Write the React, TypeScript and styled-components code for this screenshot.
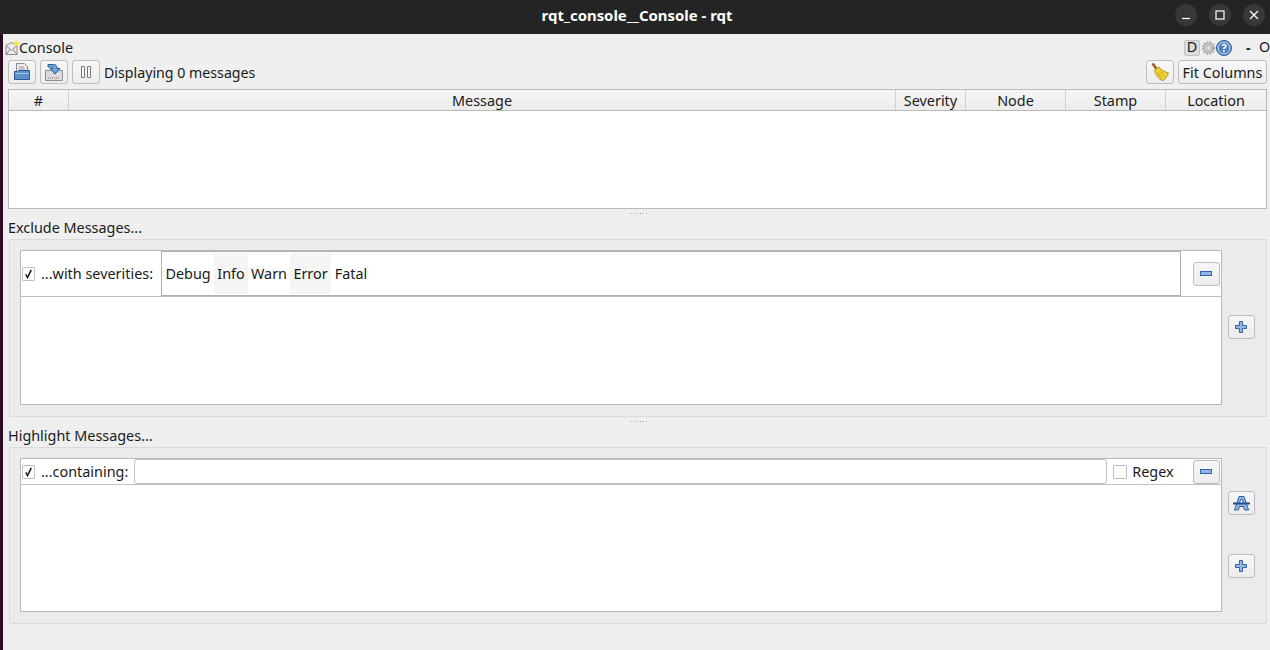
import React from "react";
import styled, { createGlobalStyle } from "styled-components";

const Global = createGlobalStyle`
  html, body { margin: 0; padding: 0; background: #efefef; overflow: hidden; }
  * { box-sizing: border-box; }
  body { font-family: "Noto Sans", "Open Sans", sans-serif; font-size: 14.4px; color: #1a1a1a; }
`;

const Screen = styled.div`width: 1270px; height: 650px; display: flex; flex-direction: column; overflow: hidden;`;
const TitleBar = styled.header`
  height: 34px; flex: none; background: #242424; color: #fff; position: relative;
  display: flex; align-items: center; justify-content: center;
  font-weight: 700; font-size: 14.9px; padding: 0 0 4px 4px;
`;
const WinButtons = styled.div`position: absolute; right: 5px; top: 4px; display: flex; gap: 12px;`;
const WinButton = styled.div`
  width: 22px; height: 22px; border-radius: 50%; background: #383838;
  display: flex; align-items: center; justify-content: center;
`;
const Body = styled.div`flex: 1; display: flex; min-height: 0;`;
const Strip = styled.div`width: 3px; flex: none; background: #2c0a24;`;
const Main = styled.main`flex: 1; background: #efefef; display: flex; flex-direction: column; padding: 0 3px 0 5px; min-width: 0;`;

const TitleRow = styled.div`
  height: 26px; flex: none; display: flex; align-items: center; margin-left: -3px; padding-top: 1px; line-height: 1;
  & > svg { flex: none; }
`;
const PluginTitle = styled.span`margin-left: -1px; padding-top: 2px; flex: 1;`;
const DButton = styled.span`
  width: 16px; height: 16px; flex: none; margin-right: 1px; background: #dcdcdc; border: 1px solid #c4c4c4; border-radius: 2px;
  display: flex; align-items: center; justify-content: center; font-size: 14.4px;
`;
const Dash = styled.span`font-weight: 700; margin-left: 14px; width: 13px; flex: none; font-size: 14px;`;
const Oh = styled.span`width: 11px; flex: none; margin-right: -3px;`;

const Toolbar = styled.div`height: 24px; flex: none; display: flex; align-items: center;`;
const ToolButton = styled.button<{ $w?: number; $gap?: number }>`
  width: ${p => p.$w ?? 28}px; height: 24px; margin-right: ${p => p.$gap ?? 4}px; padding: 0; flex: none;
  background: linear-gradient(#f7f7f7, #ececec); border: 1px solid #bdbdbd; border-radius: 3px;
  display: flex; align-items: center; justify-content: center; font: inherit; color: inherit;
`;
const Status = styled.span`flex: 1; font-size: 14.2px;`;

const Table = styled.section`
  height: 120px; margin-top: 5px; background: #fff; border: 1px solid #b9b9b9; flex: none;
`;
const HeaderRow = styled.div`height: 21px; display: flex; border-bottom: 1px solid #b9b9b9; background: linear-gradient(#f6f6f6, #ececec);`;
const HeaderCell = styled.div<{ $w?: number }>`
  ${p => (p.$w ? `width: ${p.$w}px; flex: none;` : "flex: 1;")}
  border-right: 1px solid #d0d0d0; display: flex; align-items: center; justify-content: center; line-height: 1; padding-top: 2px;
  &:last-child { border-right: 0; }
`;
const Splitter = styled.div`height: 8px; flex: none; display: flex; align-items: center; justify-content: center; padding-left: 4px;`;
const Dots = styled.span`
  width: 17px; height: 1px; background-image: repeating-linear-gradient(90deg, #aaa 0 1px, transparent 1px 3px);
`;
const SectionLabel = styled.div`height: 22px; flex: none; display: flex; align-items: center; line-height: 1;`;

const Group = styled.section<{ $h: number }>`
  height: ${p => p.$h}px; flex: none; margin-left: 1px; background: #ebebeb; border: 1px solid #dadada; border-radius: 2px;
  padding: 10px 0 11px 10px; display: flex;
`;
const List = styled.div`width: 1202px; flex: none; background: #fff; border: 1px solid #b9b9b9; display: flex; flex-direction: column;`;
const FilterRow = styled.div<{ $h: number }>`
  height: ${p => p.$h}px; flex: none; display: flex; align-items: center; border-bottom: 1px solid #c0c0c0;
`;
const Check = styled.span<{ $gap?: number; $w?: number }>`
  width: ${p => p.$w ?? 14}px; height: 14px; flex: none; border: 1px solid #c0c0c0; border-radius: 1px; background: #fff;
  display: flex; align-items: center; justify-content: center; margin-left: ${p => p.$gap ?? 0}px;
`;
const RowLabel = styled.span`margin-left: 6px; white-space: nowrap;`;
const SeverityBox = styled.div`
  width: 1020px; height: 45px; margin-left: 8px; flex: none; display: flex; align-items: stretch; padding: 1px 0;
  border: 1px solid #b0b0b0; background: #fff;
`;
const Severity = styled.span<{ $shade?: boolean; $w: number }>`
  width: ${p => p.$w}px; display: flex; align-items: center; justify-content: center; background: ${p => (p.$shade ? "#f5f5f5" : "#fff")};
`;
const Field = styled.input`
  width: 973px; height: 25px; margin-left: 6px; flex: none; border: 1px solid #c0c0c0; border-radius: 3px; background: #fff; outline: none;
`;
const RegexLabel = styled.span`margin-left: 5px; width: 60px;`;
const RowButton = styled(ToolButton)`margin: 0 1px 0 auto;`;
const SideColumn = styled.div`width: 45px; flex: none; display: flex; flex-direction: column; padding-left: 6px; align-items: flex-start;`;
const SideButton = styled(ToolButton)<{ $top: number }>`width: 27px; margin: ${p => p.$top}px 0 0 0;`;

const FileIcon = () => (
  <svg width="18" height="18" viewBox="0 0 18 18">
    <path d="M3.500 .5h8l3 3v8h-11z" fill="#e9e9e9" stroke="#8d8d8d" />
    <path d="M6 4h5M6 6h6" stroke="#a0a0a0" />
    <path d="M1.500 8.500h3l1-1h11v9h-15z" fill="#5d8fc9" stroke="#2c5a96" />
    <path d="M2.500 10.500h13" stroke="#a9c6e8" />
  </svg>
);
const SaveIcon = () => (
  <svg width="18" height="18" viewBox="0 0 18 18">
    <path d="M.5 7.500h17v10H.5z" fill="#dcdcdc" stroke="#8d8d8d" />
    <path d="M3 15h12" stroke="#777" strokeDasharray="1 1" />
    <path d="M3 1.500h5.500c2.500 0 3.500 1.500 3.500 4h3l-5 5.500-5-5.500h3c0-1-.5-1.500-1.500-1.500H3z" fill="#6ea4dc" stroke="#2c5a96" />
  </svg>
);
const PauseIcon = () => (
  <svg width="12" height="14" viewBox="0 0 12 14">
    <path d="M1.500 1.500h3v11h-3zM7.500 1.500h3v11h-3z" fill="#fafafa" stroke="#777" />
  </svg>
);
const BroomIcon = () => (
  <svg width="18" height="18" viewBox="0 0 18 18">
    <path d="M1.500 .5l4.500 6" stroke="#9a6320" strokeWidth="2.600" />
    <path d="M3.500 7l4.500-3c1.500 2.500 5 4.500 9.500 6-1 3-3 6-5.500 7.500-3.500-.5-7.500-5-8.500-10.500z" fill="#eed233" stroke="#a88a12" strokeWidth=".8" />
    <path d="M6.500 9.500l4 6.500M9.500 8.500l4.500 5.500" stroke="#c6a81c" />
  </svg>
);
const MinusIcon = () => (
  <svg width="13" height="5" viewBox="0 0 13 5"><rect x=".5" y=".5" width="11" height="4" fill="#94b5e0" stroke="#2f62a8" /></svg>
);
const PlusIcon = () => (
  <svg width="13" height="13" viewBox="0 0 13 13">
    <path d="M4.500 .5h3v4h4v3h-4v4h-3v-4h-4v-3h4z" fill="#94b5e0" stroke="#2f62a8" />
  </svg>
);
const StrikeAIcon = () => (
  <svg width="17" height="15" viewBox="0 0 17 15">
    <path fillRule="evenodd" d="M6 .5h5l4.500 13.500h-4l-1-3.500h-4l-1 3.500h-4zM7.500 3.500l-1 4h4l-1-4z" fill="#94b5e0" stroke="#2f62a8" />
    <path d="M0 7.500h17" stroke="#1f4f94" strokeWidth="2" />
  </svg>
);
const CheckMark = () => (
  <svg width="12" height="12" viewBox="0 0 12 12"><path d="M3 6.500l2 3.500 4-8.500" fill="none" stroke="#1a1a1a" strokeWidth="1.700" /></svg>
);
const PluginIcon = () => (
  <svg width="15" height="16" viewBox="0 0 15 16">
    <path d="M1 5.500l5.500-3 5.500 3v9H1z" fill="#ececec" stroke="#8a8a8a" />
    <path d="M1 5.500l5.500 5 5.500-5M1 14.500l4-5M12 14.500l-4-5" fill="none" stroke="#8a8a8a" />
    <circle cx="11.500" cy="3.500" r="2.500" fill="#f3ea52" />
  </svg>
);
const GearIcon = () => (
  <svg width="15" height="16" viewBox="0 0 16 16">
    <circle cx="8" cy="8" r="6" fill="none" stroke="#a8a8a8" strokeWidth="2.500" strokeDasharray="2 1.200" />
    <circle cx="8" cy="8" r="4.500" fill="#d5d5d5" stroke="#9a9a9a" />
    <circle cx="8" cy="8" r="2" fill="#f0f0f0" stroke="#aaa" />
  </svg>
);
const HelpIcon = () => (
  <svg width="16" height="16" viewBox="0 0 16 16">
    <circle cx="8" cy="8" r="7.500" fill="#4f82bf" stroke="#2b5c9f" />
    <circle cx="8" cy="8" r="6" fill="none" stroke="#d9e6f5" />
    <text x="8" y="12" textAnchor="middle" fontSize="11" fontWeight="700" fill="#fff" fontFamily="Noto Sans, sans-serif">?</text>
  </svg>
);

const columns = [
  { label: "#", w: 60 },
  { label: "Message" },
  { label: "Severity", w: 70 },
  { label: "Node", w: 100 },
  { label: "Stamp", w: 100 },
  { label: "Location", w: 100 },
];
const severities = [
  { label: "Debug", w: 52 },
  { label: "Info", w: 34, shade: true },
  { label: "Warn", w: 42 },
  { label: "Error", w: 41, shade: true },
  { label: "Fatal", w: 40 },
];

export default function App() {
  return (
    <Screen>
      <Global />
      <TitleBar>
        rqt_console__Console - rqt
        <WinButtons>
          <WinButton><svg width="10" height="10" viewBox="0 0 10 10"><path d="M1 8.500h8" stroke="#fff" strokeWidth="1.200" /></svg></WinButton>
          <WinButton><svg width="10" height="10" viewBox="0 0 10 10"><rect x="1" y="1" width="8" height="8" fill="none" stroke="#fff" strokeWidth="1.200" /></svg></WinButton>
          <WinButton><svg width="10" height="10" viewBox="0 0 10 10"><path d="M1 1l8 8M9 1l-8 8" stroke="#fff" strokeWidth="1.200" /></svg></WinButton>
        </WinButtons>
      </TitleBar>
      <Body>
        <Strip />
        <Main>
          <TitleRow>
            <PluginIcon />
            <PluginTitle>Console</PluginTitle>
            <DButton>D</DButton>
            <GearIcon />
            <HelpIcon />
            <Dash>-</Dash>
            <Oh>O</Oh>
          </TitleRow>
          <Toolbar>
            <ToolButton><FileIcon /></ToolButton>
            <ToolButton><SaveIcon /></ToolButton>
            <ToolButton><PauseIcon /></ToolButton>
            <Status>Displaying 0 messages</Status>
            <ToolButton><BroomIcon /></ToolButton>
            <ToolButton $w={89} $gap={0}>Fit Columns</ToolButton>
          </Toolbar>
          <Table>
            <HeaderRow>
              {columns.map(c => <HeaderCell key={c.label} $w={c.w}>{c.label}</HeaderCell>)}
            </HeaderRow>
          </Table>
          <Splitter><Dots /></Splitter>
          <SectionLabel>Exclude Messages...</SectionLabel>
          <Group $h={178}>
            <List>
              <FilterRow $h={46}>
                <Check $gap={1} $w={13}><CheckMark /></Check>
                <RowLabel>...with severities:</RowLabel>
                <SeverityBox>
                  {severities.map(s => <Severity key={s.label} $w={s.w} $shade={s.shade}>{s.label}</Severity>)}
                </SeverityBox>
                <RowButton $w={27}><MinusIcon /></RowButton>
              </FilterRow>
            </List>
            <SideColumn>
              <SideButton $top={65}><PlusIcon /></SideButton>
            </SideColumn>
          </Group>
          <Splitter><Dots /></Splitter>
          <SectionLabel>Highlight Messages...</SectionLabel>
          <Group $h={177}>
            <List>
              <FilterRow $h={26}>
                <Check $gap={1} $w={13}><CheckMark /></Check>
                <RowLabel>...containing:</RowLabel>
                <Field readOnly />
                <Check $gap={6} />
                <RegexLabel>Regex</RegexLabel>
                <RowButton $w={27}><MinusIcon /></RowButton>
              </FilterRow>
            </List>
            <SideColumn>
              <SideButton $top={33}><StrikeAIcon /></SideButton>
              <SideButton $top={39}><PlusIcon /></SideButton>
            </SideColumn>
          </Group>
        </Main>
      </Body>
    </Screen>
  );
}
